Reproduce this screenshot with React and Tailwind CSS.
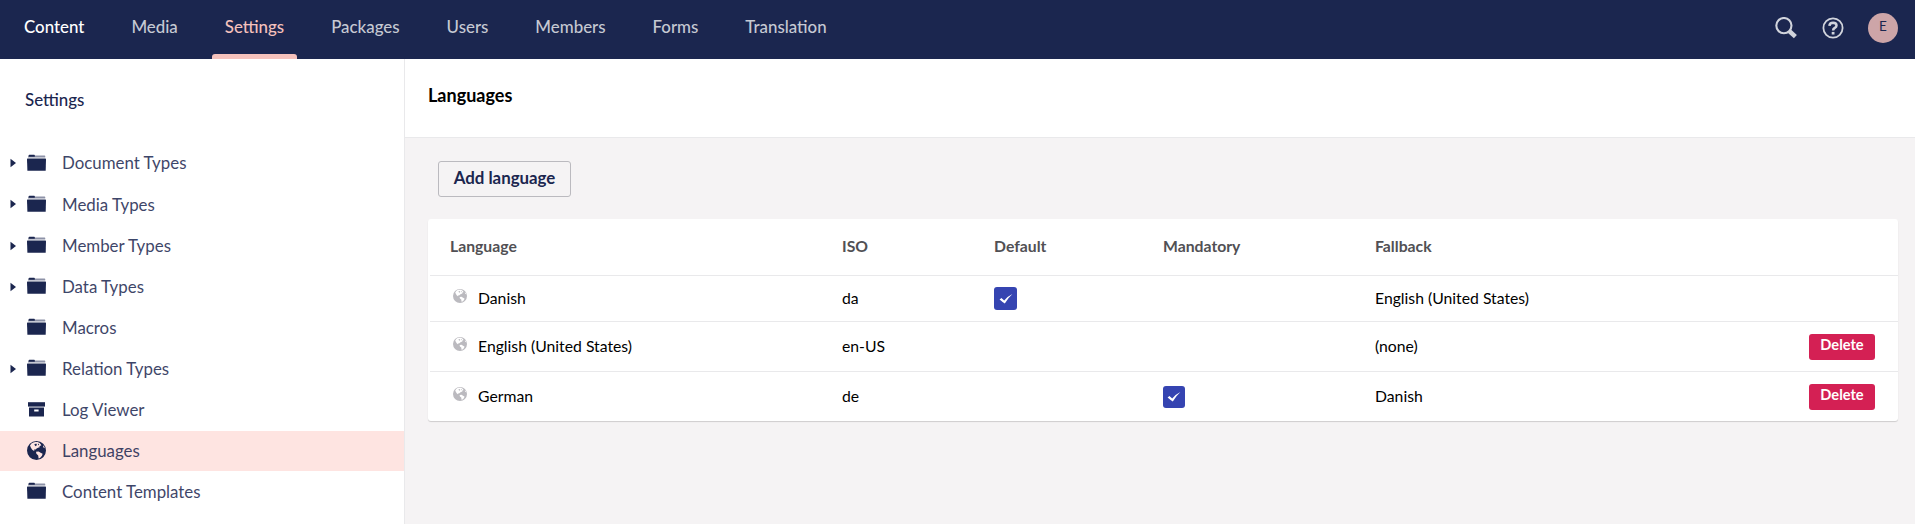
import React from "react";

const NAV = ["Content", "Media", "Settings", "Packages", "Users", "Members", "Forms", "Translation"];

const TREE = [
  { label: "Document Types", icon: "folder", open: true },
  { label: "Media Types", icon: "folder", open: true },
  { label: "Member Types", icon: "folder", open: true },
  { label: "Data Types", icon: "folder", open: true },
  { label: "Macros", icon: "folder" },
  { label: "Relation Types", icon: "folder", open: true },
  { label: "Log Viewer", icon: "box" },
  { label: "Languages", icon: "globe", active: true },
  { label: "Content Templates", icon: "folder" },
];

const ROWS = [
  { name: "Danish", iso: "da", def: true, fallback: "English (United States)", height: "h-[46px]" },
  { name: "English (United States)", iso: "en-US", fallback: "(none)", del: true, height: "h-[50px]" },
  { name: "German", iso: "de", mandatory: true, fallback: "Danish", del: true, height: "h-[50px]" },
];

function Globe({ className }) {
  return (
    <svg viewBox="0 0 19 19" className={className}>
      <path
        fill="currentColor"
        fillRule="evenodd"
        d="M9.5 0a9.5 9.5 0 1 1 0 19a9.5 9.5 0 0 1 0-19ZM4.4 2.6L3 4.6L3.8 6.6L5 8.4L6.6 9.8L7.6 9.2L7.2 8.2L8.8 8.6L9.6 7.6L11.6 6.4L12.8 6.2L12.4 5.2L14.4 4.2L12.8 2L10.6 1L8.4 1L6.2 1.5ZM9 10.8L9.4 12.8L11.2 14.4L11.6 17.4L13 17L15 14.8L15.6 12.8L13.6 11.8L11.6 10.6ZM16 4.6L16.4 6.4L17.8 7.2L17 5Z"
      />
      <path fill="currentColor" d="M7.2 3.4l2-.8l.8 1.4l-1.4 1.2zM10.8 2.6l1.4.6l-.8 1.4z" />
    </svg>
  );
}

function TreeIcon({ kind }) {
  if (kind === "globe") return <Globe className="h-[19px] w-[19px]" />;
  if (kind === "box")
    return (
      <svg viewBox="0 0 19 19" className="h-[19px] w-[19px]">
        <path fill="currentColor" d="M1 2.2h17v4.4H1z" />
        <path fill="currentColor" fillRule="evenodd" d="M2 7.4h15v9H2zM7.2 9.4h4.4v2H7.2z" />
      </svg>
    );
  return (
    <svg viewBox="0 0 19 19" className="h-[19px] w-[19px]">
      <path fill="currentColor" opacity=".5" d="M1.2 1.6h16.4q.6 0 .6.6V3.6H1z" />
      <path fill="currentColor" d="M1.8 2.6V1.4q0-.6.6-.6H7.2q.6 0 .6.6V2.8H1.8z" />
      <path fill="currentColor" d="M0 5.2q0-.6.6-.6H18.4q.6 0 .6.6L18.7 16.8H.4z" />
    </svg>
  );
}

function Check({ className }) {
  return (
    <span className={"flex items-center justify-center rounded-[3px] bg-[#3544b1] text-white " + className}>
      <svg viewBox="0 0 14 12" className="h-[12px] w-[14px]">
        <path fill="currentColor" d="M.6 6.4L2.4 4.9L5.2 7.4Q8.2 3.6 13.4 1Q9 5 5.8 10.6Q3.6 9 .6 6.4Z" />
      </svg>
    </span>
  );
}

const COLS = "grid grid-cols-[392px_152px_169px_212px_1fr] items-center pr-[23px]";

export default function App() {
  return (
    <div className="flex h-[524px] w-[1915px] flex-col overflow-hidden bg-[#f5f3f4] font-['Lato',sans-serif] text-[16.875px]">
      <header className="flex h-[59px] shrink-0 items-stretch justify-between bg-[#1b264f]">
        <nav className="flex pl-[0.5px]">
          {NAV.map((n) => (
            <div
              key={n}
              className={
                "relative flex items-center px-[23.5px] pb-[5px] font-medium " +
                (n === "Content" ? "text-white" : n === "Settings" ? "text-[#f5c1bc]" : "text-[#c6c9d3]")
              }
            >
              {n}
              {n === "Settings" && (
                <span className="absolute inset-x-[11px] bottom-0 h-[5px] rounded-t-[3px] bg-[#f5c1bc]" />
              )}
            </div>
          ))}
        </nav>
        <div className="flex items-center pr-[17px] pb-[3px] text-[#d1d4dc]">
          <svg viewBox="0 0 22 22" className="h-[22px] w-[22px]" fill="none" stroke="currentColor">
            <circle cx="8.9" cy="8.6" r="7.6" strokeWidth="2.1" />
            <path d="M14.2 14L20.4 19.6" strokeWidth="4.4" />
          </svg>
          <svg viewBox="0 0 22 22" className="ml-[25px] h-[22px] w-[22px]" fill="none" stroke="currentColor">
            <circle cx="11" cy="11" r="9.6" strokeWidth="1.8" />
            <path d="M7.4 8.8Q7.6 5.7 11.1 5.7Q14.5 5.8 14.5 8.4Q14.5 9.8 12.8 10.8Q11.1 11.8 11.1 13.4" strokeWidth="2.5" />
            <path d="M11.1 14.9v2.6" strokeWidth="2.8" />
          </svg>
          <div className="ml-[24px] flex h-[30px] w-[30px] items-center justify-center rounded-full bg-[#cda5a8] pb-[3px] text-[13.5px] text-[#1b264f]">
            E
          </div>
        </div>
      </header>
      <div className="flex min-h-0 flex-1">
        <aside className="w-[405px] shrink-0 border-r border-[#e9e9eb] bg-white text-[#1b264f]">
          <div className="flex h-[84.4px] items-center pb-[3px] pl-[25px] font-medium">Settings</div>
          <ul>
            {TREE.map((t) => (
              <li key={t.label} className="h-[41.07px]">
                <div className={"flex h-[40px] items-center pl-[10px] " + (t.active ? "bg-[#fee4e1]" : "")}>
                  <svg viewBox="0 0 6 10" className={"h-[10px] w-[6px] " + (t.open ? "" : "invisible")}>
                    <path fill="currentColor" d="M.5 .8L6 5L.5 9.2z" />
                  </svg>
                  <span className="ml-[11px]">
                    <TreeIcon kind={t.icon} />
                  </span>
                  <span className="ml-[16px] pb-[0.5px] opacity-85">{t.label}</span>
                </div>
              </li>
            ))}
          </ul>
        </aside>
        <main className="min-w-0 flex-1">
          <div className="flex h-[79px] items-center border-b border-[#e9e9eb] bg-white pb-[5px] pl-[23px] text-[18px] font-bold text-black">
            Languages
          </div>
          <div className="px-[23px] pr-[17px] pt-[23px]">
            <button className="ml-[10px] flex h-[36px] w-[133px] items-center justify-center rounded-[3px] border border-[#bbbabf] pb-[2px] font-bold text-[#1b264f]">
              Add language
            </button>
            <div className="mt-[22px] rounded-[3px] bg-white text-[15.75px] text-black shadow-[0_1px_1px_rgba(0,0,0,0.16)]">
              <div className={COLS + " h-[56px] pb-[2px] pl-[22px] font-bold text-[#515054]"}>
                <div>Language</div>
                <div>ISO</div>
                <div>Default</div>
                <div>Mandatory</div>
                <div>Fallback</div>
              </div>
              {ROWS.map((r) => (
                <div key={r.name} className={COLS + " ml-[2px] border-t border-[#e9e9eb] pl-[20px] " + r.height}>
                  <div className="flex items-center">
                    <Globe className="mb-[5px] ml-[3px] h-[14px] w-[14px] text-[#bbbabf]" />
                    <span className="ml-[11px] pb-[2px]">{r.name}</span>
                  </div>
                  <div className="pb-[2px]">{r.iso}</div>
                  <div>{r.def && <Check className="h-[23px] w-[23px]" />}</div>
                  <div>{r.mandatory && <Check className="h-[22px] w-[22px]" />}</div>
                  <div className="flex items-center justify-between">
                    <span className="pb-[2px]">{r.fallback}</span>
                    {r.del && (
                      <button className="h-[26px] w-[66px] rounded-[3px] bg-[#d42054] pb-[3px] text-[14.625px] font-bold text-white">
                        Delete
                      </button>
                    )}
                  </div>
                </div>
              ))}
            </div>
          </div>
        </main>
      </div>
    </div>
  );
}
